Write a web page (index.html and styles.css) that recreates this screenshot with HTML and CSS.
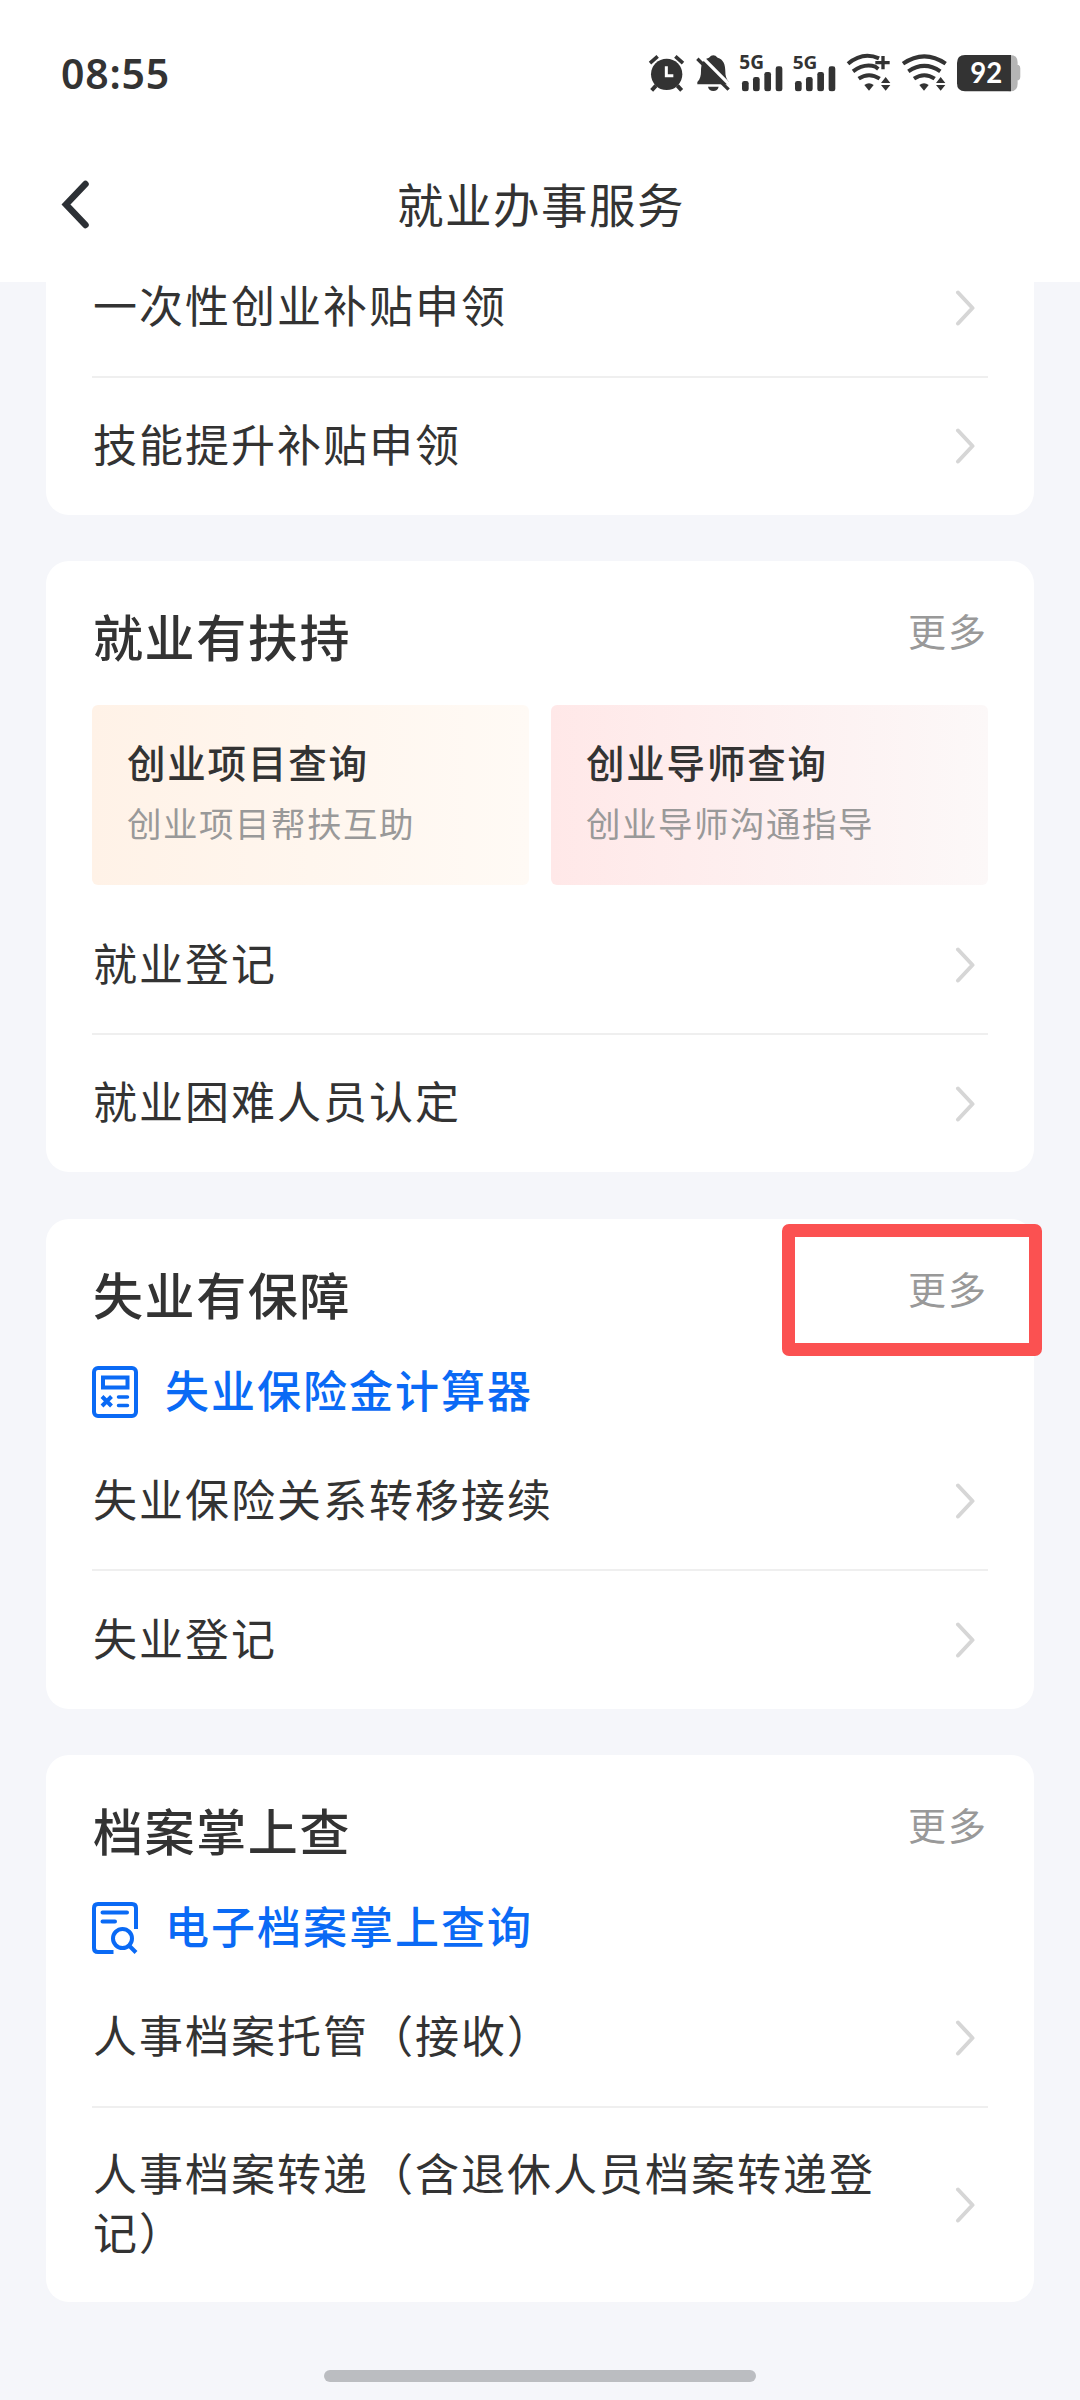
FILE: index.html
```html
<!DOCTYPE html>
<html lang="zh-CN">
<head>
<meta charset="utf-8">
<title>就业办事服务</title>
<link rel="stylesheet" href="styles.css">
</head>
<body>
<svg class="defs" aria-hidden="true">
  <symbol id="chevron" viewBox="0 0 20 36"><path d="M3 2.5 17.500 18 3 33.500" fill="none" stroke="#d6d6d6" stroke-width="4" stroke-linecap="round" stroke-linejoin="round"/></symbol>
  <symbol id="signal" viewBox="0 0 130 110">
    <g fill="#333">
      <rect x="6" y="78" width="20" height="31" rx="7"/>
      <rect x="39" y="66" width="20" height="43" rx="7"/>
      <rect x="73" y="51" width="20" height="58" rx="7"/>
      <rect x="107" y="34" width="20" height="75" rx="7"/>
    </g>
  </symbol>
</svg>
<header class="top">
  <div class="status">
    <span class="time">08:55</span>
    <div class="status-icons">
      <svg width="37" height="36.7" viewBox="55 44 111 110">
        <g fill="none" stroke="#333" stroke-linecap="butt">
          <path d="M61 68 84 48M160 68 137 48" stroke-width="11"/>
          <path d="M79 136 66 150M143 136 156 150" stroke-width="12"/>
        </g>
        <circle cx="111" cy="102" r="47" fill="#333"/>
        <path d="M110 78V106H131" fill="none" stroke="#fff" stroke-width="9"/>
      </svg>
      <svg width="33.3" height="36.7" viewBox="198 44 100 110">
        <path d="M202 132V125C211 116 213 106 213 92 213 70 220 56 237 52Q250 38 263 52C280 57 286 72 286 92 286 107 289 116 297 125V132Z" fill="#333"/>
        <path d="M234 139H266Q263 152 250 152 237 152 234 139Z" fill="#333"/>
        <path d="M212 46 304 138" stroke="#fff" stroke-width="10"/>
        <path d="M202 55 296 148" stroke="#333" stroke-width="10"/>
      </svg>
      <svg width="42.7" height="36.7" viewBox="0 0 128 110"><use href="#signal" width="130" height="110"/><text class="net" x="-2" y="43" textLength="74" lengthAdjust="spacingAndGlyphs">5G</text></svg>
      <svg width="43.3" height="36.7" viewBox="0 0 130 110"><use href="#signal" width="130" height="110"/><text class="net" x="-1" y="43" textLength="74" lengthAdjust="spacingAndGlyphs">5G</text></svg>
      <svg width="44" height="36.7" viewBox="652 44 132 110">
        <g fill="none" stroke="#333" stroke-width="12">
          <path d="M655 70Q700 32 748 54"/>
          <path d="M670 93Q704 68 737 79L746 86"/>
          <path d="M687 115Q718 94 750 115"/>
          <path d="M737 67H780M760 47V87" stroke-width="10"/>
        </g>
        <path d="M704 134Q718 124 732 134L718 151Z" fill="#333"/>
        <path d="M768 110 782 128H754ZM768 151 782 134H754Z" fill="#333"/>
      </svg>
      <svg width="44" height="36.7" viewBox="816 44 132 110">
        <g fill="none" stroke="#333" stroke-width="12">
          <path d="M819 70Q883 26 947 70"/>
          <path d="M835 93Q883 60 931 93"/>
          <path d="M852 115Q883 94 914 115"/>
        </g>
        <path d="M868 134Q882 124 896 134L882 151Z" fill="#333"/>
        <path d="M932 110 946 128H918ZM932 151 946 134H918Z" fill="#333"/>
      </svg>
      <svg width="63.300" height="36.7" viewBox="980 44 190 110">
        <path d="M1135 44H1140Q1162 44 1162 66V74H1165Q1170 76 1170 84V110Q1170 118 1165 120H1162V130Q1162 153 1140 153H1135Z" fill="#b5b5b5"/>
        <path d="M1142 44H1004Q980 44 980 68V129Q980 153 1004 153H1142Z" fill="#333"/>
        <text class="battery" x="1020" y="129" textLength="96" lengthAdjust="spacingAndGlyphs">92</text>
      </svg>
    </div>
  </div>
  <nav class="nav">
    <svg class="back" width="28" height="50" viewBox="0 0 28 50"><path d="M24.500 4 5 24.500 24.500 45" fill="none" stroke="#2c3035" stroke-width="6.500" stroke-linecap="round" stroke-linejoin="miter"/></svg>
    <h1 class="nav-title">就业办事服务</h1>
  </nav>
</header>

<main class="list">
  <section class="card">
    <a class="row"><span>一次性创业补贴申领</span><svg class="chev"><use href="#chevron"/></svg></a>
    <a class="row"><span>技能提升补贴申领</span><svg class="chev"><use href="#chevron"/></svg></a>
  </section>

  <section class="card">
    <div class="head"><h2>就业有扶持</h2><a class="more">更多</a></div>
    <div class="tiles">
      <a class="tile tile-orange"><strong>创业项目查询</strong><span>创业项目帮扶互助</span></a>
      <a class="tile tile-pink"><strong>创业导师查询</strong><span>创业导师沟通指导</span></a>
    </div>
    <a class="row"><span>就业登记</span><svg class="chev"><use href="#chevron"/></svg></a>
    <a class="row"><span>就业困难人员认定</span><svg class="chev"><use href="#chevron"/></svg></a>
  </section>

  <section class="card">
    <div class="highlight"></div>
    <div class="head"><h2>失业有保障</h2><a class="more">更多</a></div>
    <a class="link">
      <svg width="46" height="52" viewBox="0 0 46 52" fill="none" stroke="#0a6af5" stroke-width="4">
        <rect x="2" y="2" width="42" height="48" rx="4"/>
        <rect x="11" y="11.500" width="24.500" height="10"/>
        <path d="M10 30.500 19.500 40M19.500 30.500 10 40"/>
        <path d="M26.500 31H35.500M26.500 39.500H35.500" stroke-linecap="round" stroke-width="3.500"/>
      </svg>
      <span>失业保险金计算器</span>
    </a>
    <a class="row"><span>失业保险关系转移接续</span><svg class="chev"><use href="#chevron"/></svg></a>
    <a class="row"><span>失业登记</span><svg class="chev"><use href="#chevron"/></svg></a>
  </section>

  <section class="card">
    <div class="head"><h2>档案掌上查</h2><a class="more">更多</a></div>
    <a class="link">
      <svg width="46" height="52" viewBox="0 0 46 52" fill="none" stroke="#0a6af5" stroke-width="4">
        <path d="M44 27V6Q44 2 40 2H6Q2 2 2 6V46Q2 50 6 50H21.500"/>
        <path d="M10.500 10.500H35M10.500 19.500H23" stroke-linecap="round"/>
        <circle cx="30.500" cy="36.500" r="9.500"/>
        <path d="M37 43.500 44 50.500"/>
      </svg>
      <span>电子档案掌上查询</span>
    </a>
    <a class="row"><span>人事档案托管（接收）</span><svg class="chev"><use href="#chevron"/></svg></a>
    <a class="row"><span>人事档案转递（含退休人员档案转递登记）</span><svg class="chev"><use href="#chevron"/></svg></a>
  </section>
</main>
<footer class="home"><div class="home-bar"></div></footer>
</body>
</html>
```
FILE: styles.css
```css
* { box-sizing: border-box; }
body {
  margin: 0;
  width: 1080px;
  height: 2400px;
  overflow: hidden;
  display: flex;
  flex-direction: column;
  background: #f5f6fa;
  color: #333;
  font-family: "Noto Sans CJK SC", sans-serif;
}
h1, h2 { margin: 0; }
svg { display: block; flex: none; }
.defs { position: absolute; width: 0; height: 0; }

.top {
  position: relative;
  z-index: 1;
  flex: none;
  height: 282px;
  background: #fff;
}
.status {
  display: flex;
  justify-content: space-between;
  align-items: center;
  height: 146px;
  padding: 0 60px 0 61px;
}
.time {
  font: 600 41px/60px "Noto Sans", sans-serif;
  letter-spacing: 0.800px;
}
.status-icons { display: flex; gap: 10.67px; }
.status-icons svg { overflow: visible; }
.net { font: 700 56px "Noto Sans", sans-serif; fill: #333; }
.battery { font: 700 84px Lato, sans-serif; fill: #fff; }
.nav {
  display: grid;
  grid-template-columns: 60px 1fr 60px;
  align-items: center;
  height: 118px;
  padding: 0 60px 0 61px;
}
.nav-title {
  padding: 0 0 6px 1px;
  text-align: center;
  font-size: 46.500px;
  font-weight: 400;
  letter-spacing: 1.500px;
}

.list {
  display: flex;
  flex-direction: column;
  gap: 46.400px;
  margin-top: -42.500px;
  padding: 0 46px;
}
.card {
  position: relative;
  padding: 0 46px;
  border-radius: 23px;
  background: #fff;
}
.row {
  display: flex;
  align-items: center;
  justify-content: space-between;
  min-height: 138px;
  padding: 38.500px 13px 38.500px 1px;
  border-bottom: 2px solid #efefef;
  font-size: 44px;
  line-height: 58.500px;
  letter-spacing: 2px;
}
.row span {
  width: 800px;
  margin: -3px 0 3px;
}
.row:last-child {
  min-height: 137.500px;
  border-bottom: 0;
}
.chev { width: 20px; height: 36px; }

.head {
  display: flex;
  justify-content: space-between;
  height: 144px;
}
.head h2 {
  padding: 44px 0 0 1px;
  font-size: 50px;
  font-weight: 500;
  line-height: 60px;
  letter-spacing: 1.600px;
}
.more {
  padding-top: 44px;
  font-size: 38px;
  line-height: 50px;
  letter-spacing: 2px;
  color: #999;
}

.tiles {
  display: grid;
  grid-template-columns: 1fr 1fr;
  gap: 22px;
  margin-bottom: 12px;
}
.tile {
  display: flex;
  flex-direction: column;
  height: 179.500px;
  padding: 26px 35px;
  border-radius: 6px;
}
.tile-orange { background: linear-gradient(90deg, #fff2e7, #fffaf5); }
.tile-pink { background: linear-gradient(90deg, #ffe8e8, #fcf8f8); }
.tile strong {
  font-size: 38.500px;
  font-weight: 500;
  line-height: 60px;
  letter-spacing: 1.800px;
}
.tile span {
  font-size: 34.500px;
  line-height: 63px;
  letter-spacing: 1.500px;
  color: #999;
}

.link {
  display: flex;
  align-items: center;
  gap: 27px;
  height: 58.500px;
  margin-bottom: 12px;
  color: #0a6af5;
  font-size: 44px;
  font-weight: 500;
  line-height: 58px;
  letter-spacing: 2px;
}
.link span { margin: -3px 0 3px; }

.highlight {
  position: absolute;
  top: 5px;
  right: -8px;
  width: 260px;
  height: 132px;
  border: 13px solid #fb5151;
  border-radius: 7px;
}

.home {
  display: flex;
  justify-content: center;
  align-items: flex-end;
  flex: 1;
  padding-bottom: 18px;
}
.home-bar {
  width: 432px;
  height: 12px;
  border-radius: 6px;
  background: #bbbdc1;
}
```
